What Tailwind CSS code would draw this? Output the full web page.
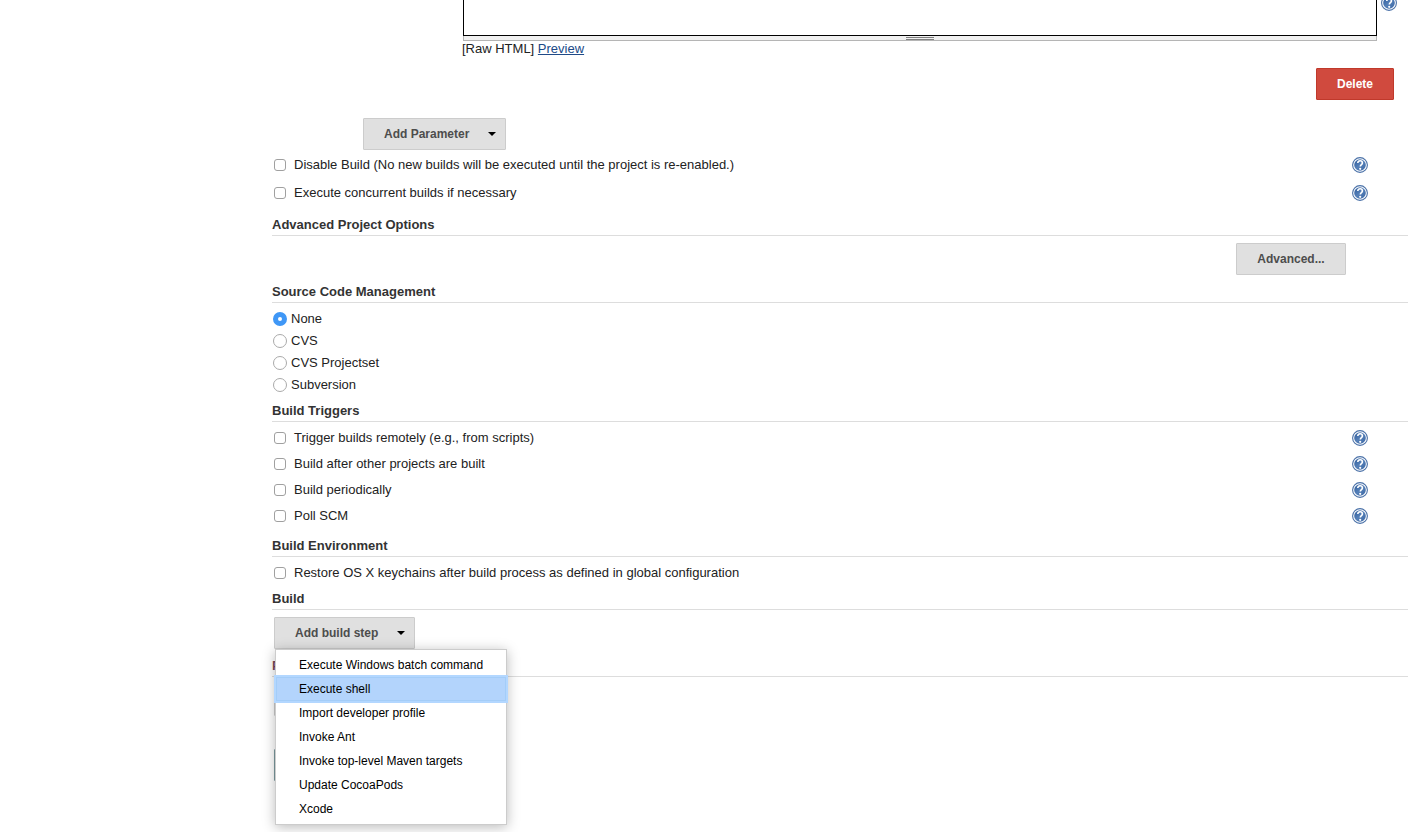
<!DOCTYPE html>
<html lang="en">
<head>
  <meta charset="UTF-8">
  <meta name="viewport" content="width=device-width, initial-scale=1">
  <title>Project Configuration</title>
  <script src="https://cdn.jsdelivr.net/npm/@tailwindcss/browser@4"></script>
</head>
<body class="min-h-screen bg-white text-[#222] font-['Liberation_Sans',Arial,sans-serif] text-[13px] leading-4">

  <!-- Shared help icon -->
  <svg class="absolute size-0" aria-hidden="true">
    <defs>
      <linearGradient id="helpFill" x1="0" y1="0" x2="1" y2="1">
        <stop offset="0" stop-color="#2f5c9b"/>
        <stop offset=".5" stop-color="#5580b8"/>
        <stop offset="1" stop-color="#3a66a3"/>
      </linearGradient>
    </defs>
    <symbol id="help" viewBox="0 0 16 16">
      <circle cx="8" cy="8" r="7.4" fill="#fff" stroke="#4a71a8" stroke-width="1.1"/>
      <circle cx="8" cy="8" r="5.8" fill="url(#helpFill)"/>
      <path d="M5.8 6.1C5.8 4.6 6.8 3.8 8.1 3.8s2.3.8 2.3 2.1c0 1.6-2.1 1.7-2.1 3.5" fill="none" stroke="#fff" stroke-width="1.6"/>
      <circle cx="8.2" cy="11.8" r="1.1" fill="#fff"/>
    </symbol>
  </svg>

  <main class="ml-[272px] mr-[13px]">
    <form>

      <!-- Parameter description -->
      <section>
        <div class="flex items-start pl-[191px] pr-[11px]">
          <div class="grow">
            <textarea aria-label="Description" class="block w-full h-9 resize-none border border-t-0 border-black outline-none"></textarea>
            <div class="h-[5px] bg-[#f0f0f0] border border-t-0 border-[#b5b5b5] flex flex-col items-center justify-center">
              <div class="w-7 h-[3px] border-y border-[#808080]"></div>
            </div>
          </div>
          <button type="button" aria-label="Help" class="ml-1 -mt-[5px]"><svg class="size-4"><use href="#help"/></svg></button>
        </div>
        <p class="pl-[190px]">[Raw HTML] <a href="#preview" class="text-[#204a87] underline">Preview</a></p>
        <div class="flex justify-end pt-[11px] pr-[14px]">
          <button type="button" class="h-8 px-5 bg-[#d04a3e] border border-[#c0392b] rounded-[1px] text-white text-xs font-bold">Delete</button>
        </div>
        <div class="pt-[18px] pl-[91px]">
          <button type="button" class="flex items-center justify-between h-8 w-[143px] pl-5 pr-[9px] bg-[#e0e0e0] border border-[#ccc] rounded-[1px] text-[#4d4d4d] text-xs font-bold">
            Add Parameter
            <svg class="w-2 h-1" viewBox="0 0 8 4"><path d="M0 0h8L4 4z" fill="#000"/></svg>
          </button>
        </div>
      </section>

      <div class="pt-px pl-0.5 pr-10">
        <div class="flex items-center justify-between h-7">
          <label class="flex items-center gap-2"><input type="checkbox" class="appearance-none size-3 border border-[#a0a0a0] rounded-[3px] bg-white">Disable Build (No new builds will be executed until the project is re-enabled.)</label>
          <button type="button" aria-label="Help"><svg class="size-4"><use href="#help"/></svg></button>
        </div>
        <div class="flex items-center justify-between h-7">
          <label class="flex items-center gap-2"><input type="checkbox" class="appearance-none size-3 border border-[#a0a0a0] rounded-[3px] bg-white">Execute concurrent builds if necessary</label>
          <button type="button" aria-label="Help"><svg class="size-4"><use href="#help"/></svg></button>
        </div>
      </div>

      <!-- Advanced Project Options -->
      <section class="pt-2.5">
        <h2 class="pb-0.5 border-b border-[#ddd] font-bold text-[#333]">Advanced Project Options</h2>
        <div class="flex justify-end pt-[7px] pr-[62px]">
          <button type="button" class="h-8 w-[110px] bg-[#e0e0e0] border border-[#ccc] rounded-[1px] text-[#4d4d4d] text-xs font-bold">Advanced...</button>
        </div>
      </section>

      <!-- Source Code Management -->
      <section class="pt-[9px]">
        <h2 class="pb-0.5 border-b border-[#ddd] font-bold text-[#333]">Source Code Management</h2>
        <div class="pt-[5px] pl-px">
          <label class="flex items-center gap-1 h-[22px]"><input type="radio" name="scm" checked class="appearance-none size-3.5 rounded-full border border-[#aaa] bg-white checked:border-[5px] checked:border-[#3f97f6]">None</label>
          <label class="flex items-center gap-1 h-[22px]"><input type="radio" name="scm" class="appearance-none size-3.5 rounded-full border border-[#aaa] bg-white checked:border-[5px] checked:border-[#3f97f6]">CVS</label>
          <label class="flex items-center gap-1 h-[22px]"><input type="radio" name="scm" class="appearance-none size-3.5 rounded-full border border-[#aaa] bg-white checked:border-[5px] checked:border-[#3f97f6]">CVS Projectset</label>
          <label class="flex items-center gap-1 h-[22px]"><input type="radio" name="scm" class="appearance-none size-3.5 rounded-full border border-[#aaa] bg-white checked:border-[5px] checked:border-[#3f97f6]">Subversion</label>
        </div>
      </section>

      <!-- Build Triggers -->
      <section class="pt-[7px]">
        <h2 class="pb-0.5 border-b border-[#ddd] font-bold text-[#333]">Build Triggers</h2>
        <div class="pt-[3px] pl-0.5 pr-10">
          <div class="flex items-center justify-between h-[26px]">
            <label class="flex items-center gap-2"><input type="checkbox" class="appearance-none size-3 border border-[#a0a0a0] rounded-[3px] bg-white">Trigger builds remotely (e.g., from scripts)</label>
            <button type="button" aria-label="Help"><svg class="size-4"><use href="#help"/></svg></button>
          </div>
          <div class="flex items-center justify-between h-[26px]">
            <label class="flex items-center gap-2"><input type="checkbox" class="appearance-none size-3 border border-[#a0a0a0] rounded-[3px] bg-white">Build after other projects are built</label>
            <button type="button" aria-label="Help"><svg class="size-4"><use href="#help"/></svg></button>
          </div>
          <div class="flex items-center justify-between h-[26px]">
            <label class="flex items-center gap-2"><input type="checkbox" class="appearance-none size-3 border border-[#a0a0a0] rounded-[3px] bg-white">Build periodically</label>
            <button type="button" aria-label="Help"><svg class="size-4"><use href="#help"/></svg></button>
          </div>
          <div class="flex items-center justify-between h-[26px]">
            <label class="flex items-center gap-2"><input type="checkbox" class="appearance-none size-3 border border-[#a0a0a0] rounded-[3px] bg-white">Poll SCM</label>
            <button type="button" aria-label="Help"><svg class="size-4"><use href="#help"/></svg></button>
          </div>
        </div>
      </section>

      <!-- Build Environment -->
      <section class="pt-[9px]">
        <h2 class="pb-0.5 border-b border-[#ddd] font-bold text-[#333]">Build Environment</h2>
        <div class="pt-[3px] pl-0.5">
          <label class="flex items-center gap-2 h-[26px]"><input type="checkbox" class="appearance-none size-3 border border-[#a0a0a0] rounded-[3px] bg-white">Restore OS X keychains after build process as defined in global configuration</label>
        </div>
      </section>

      <!-- Build -->
      <section class="pt-[5px]">
        <h2 class="pb-0.5 border-b border-[#ddd] font-bold text-[#333]">Build</h2>
        <div class="relative pt-[7px] pl-0.5">
          <button type="button" aria-haspopup="menu" aria-expanded="true" class="flex items-center justify-between h-8 w-[141px] pl-5 pr-[9px] bg-[#e0e0e0] border border-[#ccc] rounded-[1px] text-[#4d4d4d] text-xs font-bold">
            Add build step
            <svg class="w-2 h-1" viewBox="0 0 8 4"><path d="M0 0h8L4 4z" fill="#000"/></svg>
          </button>
          <!-- Open menu -->
          <ul role="menu" class="absolute z-10 top-full left-[3px] w-[232px] py-[3px] bg-white border border-[#ccc] shadow-[0_2px_12px_rgba(0,0,0,0.28)] text-xs text-black">
            <li class="h-6"><button type="button" role="menuitem" class="w-full h-full pl-[23px] text-left">Execute Windows batch command</button></li>
            <li class="h-6"><button type="button" role="menuitem" class="w-full h-full pl-[23px] text-left bg-[#b3d4fc] outline-2 outline-[#b3d7ff] ring-1 ring-inset ring-[#a4cdf8]">Execute shell</button></li>
            <li class="h-6"><button type="button" role="menuitem" class="w-full h-full pl-[23px] text-left">Import developer profile</button></li>
            <li class="h-6"><button type="button" role="menuitem" class="w-full h-full pl-[23px] text-left">Invoke Ant</button></li>
            <li class="h-6"><button type="button" role="menuitem" class="w-full h-full pl-[23px] text-left">Invoke top-level Maven targets</button></li>
            <li class="h-6"><button type="button" role="menuitem" class="w-full h-full pl-[23px] text-left">Update CocoaPods</button></li>
            <li class="h-6"><button type="button" role="menuitem" class="w-full h-full pl-[23px] text-left">Xcode</button></li>
          </ul>
        </div>
      </section>

      <!-- Post-build Actions, under the open menu -->
      <section class="pt-[9px]">
        <h2 aria-label="Post-build Actions" class="pb-0.5 border-b border-[#ddd] font-bold text-[#7a4a58]">P</h2>
        <div class="pt-[7px] pl-0.5">
          <button type="button" aria-label="Add post-build action" class="block h-8 w-[190px] bg-[#e0e0e0] border border-[#ccc] rounded-[1px]"></button>
        </div>
        <div class="flex gap-2 pt-[33px] pl-0.5">
          <button type="submit" aria-label="Save" class="h-8 w-[72px] bg-[#4b758b] border border-[#7d9ba0] rounded-[1px]"></button>
          <button type="button" aria-label="Apply" class="h-8 w-[76px] bg-[#e0e0e0] border border-[#ccc] rounded-[1px]"></button>
        </div>
      </section>

    </form>
  </main>

</body>
</html>
